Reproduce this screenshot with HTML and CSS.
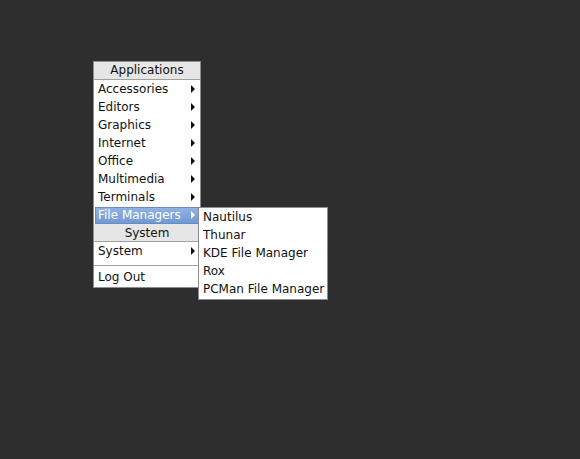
FILE: index.html
```html
<!DOCTYPE html>
<html lang="en">
<head>
    <meta charset="UTF-8">
    <title>Desktop Menu</title>
    <link rel="stylesheet" href="styles.css">
</head>
<body>
    <div class="desktop">
        <div class="menu root-menu">
            <div class="menu-title">Applications</div>
            <div class="menu-item sub">Accessories</div>
            <div class="menu-item sub">Editors</div>
            <div class="menu-item sub">Graphics</div>
            <div class="menu-item sub">Internet</div>
            <div class="menu-item sub">Office</div>
            <div class="menu-item sub">Multimedia</div>
            <div class="menu-item sub">Terminals</div>
            <div class="menu-item sub active">File Managers</div>
            <div class="menu-title">System</div>
            <div class="menu-item sub lower">System</div>
            <div class="menu-sep"></div>
            <div class="menu-item">Log Out</div>
        </div>

        <div class="menu child-menu">
            <div class="menu-item">Nautilus</div>
            <div class="menu-item">Thunar</div>
            <div class="menu-item">KDE File Manager</div>
            <div class="menu-item">Rox</div>
            <div class="menu-item">PCMan File Manager</div>
        </div>
    </div>
</body>
</html>
```

FILE: styles.css
```css
/* Desktop background */
body {
    margin: 0;
    padding: 0;
    background: #2e2e2e;
    font-family: 'DejaVu Sans', sans-serif;
    font-size: 12px;
}

.desktop {
    position: relative;
    width: 580px;
    height: 459px;
}

/* Menu boxes */
.menu {
    position: absolute;
    background: #fff;
    border: 1px solid #8c8c8c;
    color: #111;
}

.root-menu {
    left: 93px;
    top: 61px;
    width: 106px;
    padding-bottom: 1px;
}

.child-menu {
    left: 198px;
    top: 207px;
    width: 128px;
    padding: 0 0 1px;
}

.menu-title {
    height: 17px;
    line-height: 18px;
    background: #e6e6e6;
    border-bottom: 1px solid #a0a0a0;
    text-align: center;
    color: #111;
}

.menu-title:first-child {
    line-height: 17px;
}

.menu-item {
    position: relative;
    height: 18px;
    line-height: 18px;
    padding: 0 4px;
    white-space: nowrap;
}

.menu-item.lower {
    line-height: 19px;
}

/* Little arrow for items with a submenu */
.menu-item.sub::after {
    content: "";
    position: absolute;
    right: 5px;
    top: 5px;
    border-left: 4px solid #111;
    border-top: 4px solid transparent;
    border-bottom: 4px solid transparent;
}

.menu-item.active {
    height: 15px;
    line-height: 15px;
    margin: 1px 1px 0;
    padding: 0 2px;
    background: linear-gradient(#91b3e3, #7199d2);
    border: 1px solid #6a8cc2;
    color: #fff;
}

.menu-item.active::after {
    right: 3px;
    top: 3px;
    border-left-color: #fff;
}

.menu-sep {
    height: 1px;
    margin: 5px 0 2px;
    background: #a0a0a0;
}
```
